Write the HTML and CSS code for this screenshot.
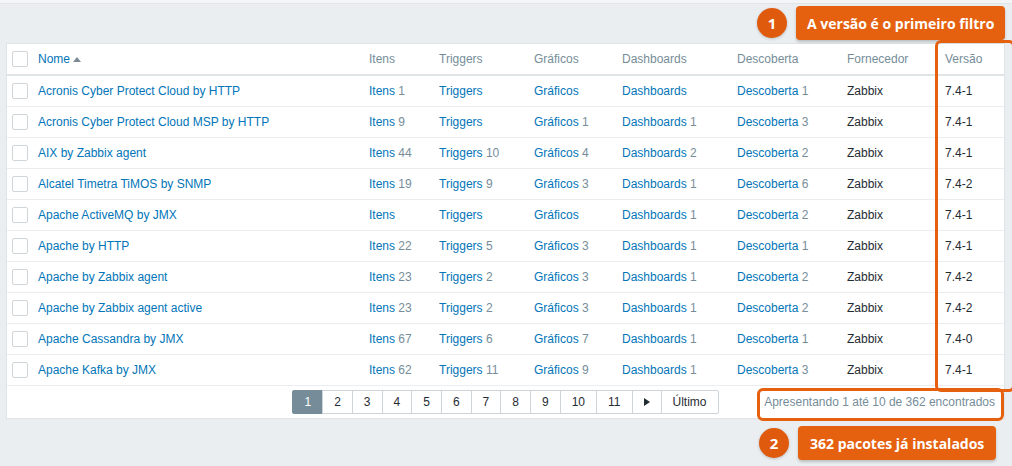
FILE: index.html
```html
<!DOCTYPE html>
<html lang="pt">
<head>
<meta charset="utf-8">
<title>Templates</title>
<link rel="stylesheet" href="styles.css">
</head>
<body>
<div class="topbar"></div>
<div class="panel">
  <table class="list">
    <colgroup>
      <col class="c-chk"><col class="c-name"><col class="c-itens"><col class="c-trig"><col class="c-graf"><col class="c-dash"><col class="c-desc"><col class="c-forn"><col>
    </colgroup>
    <thead>
      <tr>
        <th><span class="chk"></span></th>
        <th><a class="link">Nome</a><span class="arrow-up"></span></th>
        <th>Itens</th>
        <th>Triggers</th>
        <th>Gráficos</th>
        <th>Dashboards</th>
        <th>Descoberta</th>
        <th>Fornecedor</th>
        <th>Versão</th>
      </tr>
    </thead>
    <tbody>
      <tr><td><span class="chk"></span></td><td><a class="link">Acronis Cyber Protect Cloud by HTTP</a></td><td><a class="link">Itens</a> <span class="cnt">1</span></td><td><a class="link">Triggers</a></td><td><a class="link">Gráficos</a></td><td><a class="link">Dashboards</a></td><td><a class="link">Descoberta</a> <span class="cnt">1</span></td><td>Zabbix</td><td>7.4-1</td></tr>
      <tr><td><span class="chk"></span></td><td><a class="link">Acronis Cyber Protect Cloud MSP by HTTP</a></td><td><a class="link">Itens</a> <span class="cnt">9</span></td><td><a class="link">Triggers</a></td><td><a class="link">Gráficos</a> <span class="cnt">1</span></td><td><a class="link">Dashboards</a> <span class="cnt">1</span></td><td><a class="link">Descoberta</a> <span class="cnt">3</span></td><td>Zabbix</td><td>7.4-1</td></tr>
      <tr><td><span class="chk"></span></td><td><a class="link">AIX by Zabbix agent</a></td><td><a class="link">Itens</a> <span class="cnt">44</span></td><td><a class="link">Triggers</a> <span class="cnt">10</span></td><td><a class="link">Gráficos</a> <span class="cnt">4</span></td><td><a class="link">Dashboards</a> <span class="cnt">2</span></td><td><a class="link">Descoberta</a> <span class="cnt">2</span></td><td>Zabbix</td><td>7.4-1</td></tr>
      <tr><td><span class="chk"></span></td><td><a class="link">Alcatel Timetra TiMOS by SNMP</a></td><td><a class="link">Itens</a> <span class="cnt">19</span></td><td><a class="link">Triggers</a> <span class="cnt">9</span></td><td><a class="link">Gráficos</a> <span class="cnt">3</span></td><td><a class="link">Dashboards</a> <span class="cnt">1</span></td><td><a class="link">Descoberta</a> <span class="cnt">6</span></td><td>Zabbix</td><td>7.4-2</td></tr>
      <tr><td><span class="chk"></span></td><td><a class="link">Apache ActiveMQ by JMX</a></td><td><a class="link">Itens</a></td><td><a class="link">Triggers</a></td><td><a class="link">Gráficos</a></td><td><a class="link">Dashboards</a> <span class="cnt">1</span></td><td><a class="link">Descoberta</a> <span class="cnt">2</span></td><td>Zabbix</td><td>7.4-1</td></tr>
      <tr><td><span class="chk"></span></td><td><a class="link">Apache by HTTP</a></td><td><a class="link">Itens</a> <span class="cnt">22</span></td><td><a class="link">Triggers</a> <span class="cnt">5</span></td><td><a class="link">Gráficos</a> <span class="cnt">3</span></td><td><a class="link">Dashboards</a> <span class="cnt">1</span></td><td><a class="link">Descoberta</a> <span class="cnt">1</span></td><td>Zabbix</td><td>7.4-1</td></tr>
      <tr><td><span class="chk"></span></td><td><a class="link">Apache by Zabbix agent</a></td><td><a class="link">Itens</a> <span class="cnt">23</span></td><td><a class="link">Triggers</a> <span class="cnt">2</span></td><td><a class="link">Gráficos</a> <span class="cnt">3</span></td><td><a class="link">Dashboards</a> <span class="cnt">1</span></td><td><a class="link">Descoberta</a> <span class="cnt">2</span></td><td>Zabbix</td><td>7.4-2</td></tr>
      <tr><td><span class="chk"></span></td><td><a class="link">Apache by Zabbix agent active</a></td><td><a class="link">Itens</a> <span class="cnt">23</span></td><td><a class="link">Triggers</a> <span class="cnt">2</span></td><td><a class="link">Gráficos</a> <span class="cnt">3</span></td><td><a class="link">Dashboards</a> <span class="cnt">1</span></td><td><a class="link">Descoberta</a> <span class="cnt">2</span></td><td>Zabbix</td><td>7.4-2</td></tr>
      <tr><td><span class="chk"></span></td><td><a class="link">Apache Cassandra by JMX</a></td><td><a class="link">Itens</a> <span class="cnt">67</span></td><td><a class="link">Triggers</a> <span class="cnt">6</span></td><td><a class="link">Gráficos</a> <span class="cnt">7</span></td><td><a class="link">Dashboards</a> <span class="cnt">1</span></td><td><a class="link">Descoberta</a> <span class="cnt">1</span></td><td>Zabbix</td><td>7.4-0</td></tr>
      <tr><td><span class="chk"></span></td><td><a class="link">Apache Kafka by JMX</a></td><td><a class="link">Itens</a> <span class="cnt">62</span></td><td><a class="link">Triggers</a> <span class="cnt">11</span></td><td><a class="link">Gráficos</a> <span class="cnt">9</span></td><td><a class="link">Dashboards</a> <span class="cnt">1</span></td><td><a class="link">Descoberta</a> <span class="cnt">3</span></td><td>Zabbix</td><td>7.4-1</td></tr>
    </tbody>
  </table>
  <div class="pager">
    <div></div>
    <div class="pages">
      <span class="pg active">1</span><span class="pg">2</span><span class="pg">3</span><span class="pg">4</span><span class="pg">5</span><span class="pg">6</span><span class="pg">7</span><span class="pg">8</span><span class="pg">9</span><span class="pg">10</span><span class="pg">11</span><span class="pg"><span class="arrow-right"></span></span><span class="pg">Último</span>
    </div>
    <div class="summary">Apresentando 1 até 10 de 362 encontrados</div>
  </div>
</div>

<div class="callout callout-1"><span class="num">1</span><span class="label">A versão é o primeiro filtro</span></div>
<div class="callout callout-2"><span class="num">2</span><span class="label">362 pacotes já instalados</span></div>
<div class="hl hl-version"></div>
<div class="hl hl-summary"></div>
</body>
</html>
```

FILE: styles.css
```css
html, body {
  margin: 0;
  padding: 0;
}
body {
  width: 1012px;
  height: 466px;
  overflow: hidden;
  position: relative;
  background: #ebeef0;
  font-family: "Liberation Sans", Arial, sans-serif;
  font-size: 12px;
  color: #1f2c33;
}
.topbar {
  height: 3px;
  background: #f4f5f6;
  border-bottom: 1px solid #e2e5e8;
}
.panel {
  margin: 39px 7px 0 6px;
  background: #fff;
  border: 1px solid #dfe4e7;
}
.list {
  width: 100%;
  border-collapse: collapse;
  table-layout: fixed;
}
.c-chk { width: 31px; }
.c-name { width: 331px; }
.c-itens { width: 70px; }
.c-trig { width: 95px; }
.c-graf { width: 88px; }
.c-dash { width: 115px; }
.c-desc { width: 110px; }
.c-forn { width: 98px; }
.list th,
.list td {
  padding: 0;
  height: 30px;
  text-align: left;
  vertical-align: middle;
  white-space: nowrap;
}
.list th {
  font-weight: normal;
  color: #768d99;
  border-bottom: 2px solid #dfe4e7;
}
.list td {
  border-bottom: 1px solid #ebeef0;
}
.link {
  color: #0275b8;
  text-decoration: none;
}
.cnt {
  color: #768d99;
}
.chk {
  display: block;
  width: 14px;
  height: 14px;
  margin-left: 5px;
  border: 1px solid #cfd5d9;
  border-radius: 2px;
  background: #fff;
}
.arrow-up {
  display: inline-block;
  width: 0;
  height: 0;
  margin-left: 3px;
  vertical-align: 1px;
  border-left: 4px solid transparent;
  border-right: 4px solid transparent;
  border-bottom: 5px solid #7c8a93;
}
.pager {
  display: grid;
  grid-template-columns: 1fr auto 1fr;
  align-items: center;
  height: 32px;
}
.pages {
  display: flex;
  padding-left: 1px;
}
.pg {
  box-sizing: border-box;
  height: 24px;
  min-width: 30px;
  padding: 0 11px;
  margin-left: -1px;
  display: flex;
  align-items: center;
  justify-content: center;
  border: 1px solid #cfd4d8;
  background: #fff;
  color: #1f2c33;
}
.pg:first-child { border-radius: 2px 0 0 2px; }
.pg:last-child { border-radius: 0 2px 2px 0; }
.pg.active {
  background: #768d99;
  border-color: #768d99;
  color: #fff;
}
.arrow-right {
  width: 0;
  height: 0;
  border-top: 4px solid transparent;
  border-bottom: 4px solid transparent;
  border-left: 6px solid #1f2c33;
}
.summary {
  justify-self: end;
  padding-right: 9px;
  color: #768d99;
}

/* annotations */
.callout {
  position: absolute;
  display: flex;
  align-items: center;
  gap: 9px;
  font-family: "Open Sans", "Liberation Sans", sans-serif;
  font-weight: 700;
  color: #fff;
}
.callout .num {
  width: 30px;
  height: 30px;
  border-radius: 50%;
  background: #e05a0e;
  display: flex;
  align-items: center;
  justify-content: center;
  font-size: 15px;
  box-shadow: 0 1px 3px rgba(0,0,0,0.2);
}
.callout .label {
  height: 34px;
  display: flex;
  align-items: center;
  padding: 0 11px;
  border-radius: 4px;
  background: #e5600f;
  font-size: 14px;
  box-shadow: 0 2px 3px rgba(0,0,0,0.2);
}
.callout-1 { left: 757px; top: 6px; }
.callout-2 { left: 759px; top: 426px; }
.callout-2 .label { padding: 0 12px; }
.hl {
  position: absolute;
  border: 3px solid #e5600f;
  border-radius: 6px;
  box-sizing: border-box;
}
.hl-version {
  left: 935px;
  top: 40px;
  width: 80px;
  height: 352px;
}
.hl-summary {
  left: 757px;
  top: 388px;
  width: 247px;
  height: 33px;
}
```
